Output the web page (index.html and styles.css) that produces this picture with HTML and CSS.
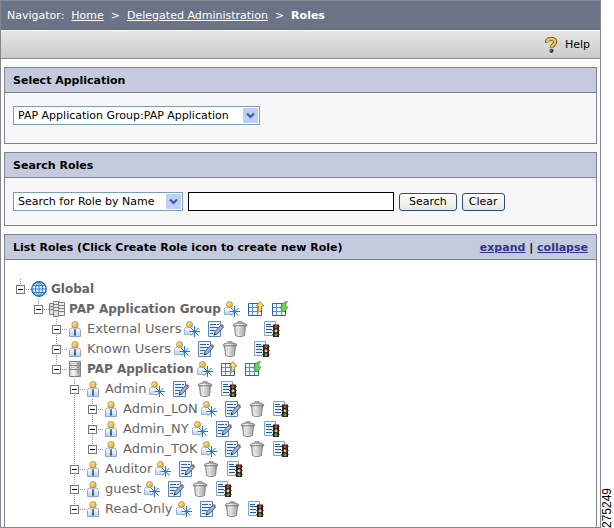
FILE: index.html
```html
<!DOCTYPE html>
<html lang="en">
<head>
	<meta charset="utf-8">
	<meta name="viewport" content="width=device-width, initial-scale=1">
	<title>Roles</title>
	<link rel="stylesheet" href="styles.css">
</head>
<body>
<svg class="sprite" aria-hidden="true">
	<defs>
		<linearGradient id="g-gold" x1="0" y1="0" x2="1" y2="1"><stop offset="0" stop-color="#fff0b0"/><stop offset="1" stop-color="#dda52c"/></linearGradient>
		<linearGradient id="g-shirt" x1="0" y1="0" x2="0" y2="1"><stop offset="0" stop-color="#ffffff"/><stop offset="1" stop-color="#b9d2ee"/></linearGradient>
		<linearGradient id="g-steel" x1="0" y1="0" x2="1" y2="0"><stop offset="0" stop-color="#c8c8c8"/><stop offset=".35" stop-color="#fafafa"/><stop offset="1" stop-color="#999"/></linearGradient>
	</defs>
	<symbol id="globe" viewBox="0 0 16 16">
		<circle cx="8" cy="8" r="7.2" fill="#e4f2ff" stroke="#1b62b4" stroke-width="1.4"/>
		<path d="M8 1v14M1 8h14M2 4.5h12M2 11.5h12M8 1C3.3 4 3.3 12 8 15M8 1c4.7 3 4.7 11 0 14" fill="none" stroke="#2f7ccc" stroke-width="1"/>
	</symbol>
	<symbol id="group" viewBox="0 0 16 16">
		<path d="M.5 2.500h7v11h-7z" fill="#e0e0e0" stroke="#808080"/>
		<path d="M1 5.500h6M1 8.500h6" stroke="#808080"/>
		<path d="M4.500 .5h6v12h-6z" fill="#ededed" stroke="#808080"/>
		<path d="M5 3.500h5M5 6.500h5" stroke="#808080"/>
		<path d="M9.500 1.500h6v13h-6z" fill="#ededed" stroke="#808080"/>
		<path d="M10 4.500h5M10 7.500h5M10 10.500h5" stroke="#808080"/>
		<path d="M4.500 9.500h5v6h-5z" fill="#dcdcdc" stroke="#808080"/>
	</symbol>
	<symbol id="server" viewBox="0 0 16 16">
		<path d="M2.500 .5h11v15h-11z" fill="url(#g-steel)" stroke="#808080"/>
		<path d="M3 4.500h10M3 8.500h10" stroke="#808080"/>
		<path d="M4 2.500h4M4 6.500h4" stroke="#bbb"/>
		<path d="M10 2.500h2M10 6.500h2M10 10.500h2" stroke="#5f9f5f"/>
	</symbol>
	<symbol id="user" viewBox="0 0 16 16">
		<path d="M2.500 15.500V9.500c0-1.500 1-2.500 2.500-2.500h6c1.500 0 2.500 1 2.500 2.500v6z" fill="url(#g-shirt)" stroke="#8fa5c0"/>
		<path d="M5.500 7l2.500 2 2.500-2z" fill="#fff" stroke="#8fa5c0" stroke-width=".6"/>
		<path d="M7.300 8.300h1.400l.3 5.700-1 1-1-1z" fill="#2c5698"/>
		<circle cx="8" cy="3.700" r="3.200" fill="url(#g-gold)" stroke="#b08428" stroke-width=".8"/>
	</symbol>
	<symbol id="newuser" viewBox="0 0 16 16">
		<path d="M.5 13.500V8.500c0-1.500 1-2.500 2.500-2.500h5c1.500 0 2.500 1 2.500 2.500v5z" fill="url(#g-shirt)" stroke="#9fb4cf"/>
		<circle cx="5.500" cy="3.500" r="3" fill="url(#g-gold)" stroke="#b08428" stroke-width=".8"/>
		<circle cx="11" cy="10.500" r="4.500" fill="#fff" opacity=".8"/>
		<path d="M10.500 5v11M5.500 10.500H16M7 7l7.500 7.500M14.500 7L7 14.500" stroke="#1f7acb" stroke-width="1"/>
	</symbol>
	<symbol id="edit" viewBox="0 0 16 16">
		<path d="M.5 .5h12v15H.5z" fill="#eaf2fc" stroke="#5b82bd"/>
		<path d="M2 3.500h6M9 3.500h2M2 6.500h8M2 9.500h5M2 12.500h3" stroke="#2f62ae"/>
		<path d="M6 14l1-3.500L13 4l2.500 2L9.500 12.700z" fill="#8bb8e6" stroke="#34507c" stroke-width=".9"/>
		<path d="M12.400 4.600L14 3l2 1.700-1.500 1.900z" fill="#d0533f"/>
		<path d="M5.800 14.300l.8-2.100 1.500 1.300z" fill="#222"/>
	</symbol>
	<symbol id="trash" viewBox="0 0 16 16">
		<path d="M2.500 4.500h11l-1 10c-1.500 1.300-7.500 1.300-9 0z" fill="url(#g-steel)" stroke="#858585"/>
		<path d="M5.700 6.500l.4 7M8 6.500v7.300M10.300 6.500l-.4 7" stroke="#b5b5b5" stroke-width=".7"/>
		<path d="M1.200 4.800c0-2 2-2.800 6.800-2.800s6.800.8 6.800 2.800z" fill="url(#g-steel)" stroke="#777"/>
		<path d="M6 2V.8h4V2" fill="none" stroke="#777"/>
	</symbol>
	<symbol id="policy" viewBox="0 0 16 16">
		<path d="M.5 .5h11v14H.5z" fill="#f1f6fd" stroke="#8aa0bf"/>
		<path d="M2 3.500h5M2 5.500h7M2 8.500h6M2 11.500h6" stroke="#2459a8"/>
		<path d="M9 3.500h6V16H9z" fill="#2a211c"/>
		<path d="M8 5h1.200v1.500zM8 9h1.200v1.500zM8 13h1.200v1.500zM16 5h-1.200v1.500zM16 9h-1.200v1.500zM16 13h-1.200v1.500z" fill="#2a211c"/>
		<circle cx="12" cy="5.700" r="1.500" fill="#d8442f"/>
		<circle cx="12" cy="9.700" r="1.500" fill="#f0cc70"/>
		<circle cx="12" cy="13.700" r="1.500" fill="#4fb04f"/>
	</symbol>
	<symbol id="export" viewBox="0 0 16 16">
		<path d="M.5 2.500h13v12H.5z" fill="#eef6ff" stroke="#2b62b4"/>
		<path d="M1 6.500h12M1 10.500h12M4.500 3v11M9.500 3v11" stroke="#5b8bd0"/>
		<path d="M12 .6l3.800 4.400h-2c.2 3.500-.8 5.800-4.500 6.500 1.500-1.800 1.500-3.500 1.300-6.500H8.200z" fill="#fbdc70" stroke="#b27a13" stroke-width=".8"/>
	</symbol>
	<symbol id="import" viewBox="0 0 16 16">
		<path d="M.5 2.500h13v12H.5z" fill="#eef6ff" stroke="#2b62b4"/>
		<path d="M1 6.500h12M1 10.500h12M4.500 3v11M9.500 3v11" stroke="#5b8bd0"/>
		<path d="M12 11L7.800 6.200H10C9.800 3 11.500.8 15.500.5 13.800 2 13.700 4 13.900 6.200H16z" fill="#6ed84a" stroke="#3f9a30" stroke-width=".8"/>
	</symbol>
	<symbol id="help" viewBox="0 0 16 16">
		<path d="M4 5.500C3.700 2.800 5.500 2 8 2s4.300 1 4.300 3.200c0 2.500-3.800 2.800-3.800 5.300" fill="none" stroke="#5d4a1c" stroke-width="4"/>
		<path d="M4.200 4.900C4.200 2.800 5.500 2 8 2s4.300 1 4.300 3.200c0 2.500-3.800 2.800-3.800 4.700" fill="none" stroke="#efc455" stroke-width="2.400"/>
		<circle cx="8.500" cy="13.700" r="2" fill="#2d2a26"/>
		<circle cx="8" cy="13.300" r=".7" fill="#bbb"/>
	</symbol>
</svg>

<div class="page">
	<div class="frame">
		<nav class="navigator">
			<span>Navigator:</span>
			<a href="#">Home</a>
			<span>&gt;</span>
			<a href="#">Delegated Administration</a>
			<span>&gt;</span>
			<strong>Roles</strong>
		</nav>
		<div class="toolbar">
			<a class="help" href="#"><svg class="icon"><use href="#help"/></svg>Help</a>
		</div>

		<main class="panels">
			<section class="panel">
				<h2 class="panel-head">Select Application</h2>
				<form class="panel-body app-form">
					<select class="drop drop-app" aria-label="Application">
						<option>PAP Application Group:PAP Application</option>
					</select>
				</form>
			</section>

			<section class="panel">
				<h2 class="panel-head">Search Roles</h2>
				<form class="panel-body search-form">
					<select class="drop drop-search" aria-label="Search type">
						<option>Search for Role by Name</option>
					</select>
					<input class="search-text" type="text" aria-label="Role name">
					<button class="btn btn-search" type="button">Search</button>
					<button class="btn" type="button">Clear</button>
				</form>
			</section>

			<section class="panel panel-list">
				<div class="panel-head">
					<h2>List Roles (Click Create Role icon to create new Role)</h2>
					<div class="links"><a href="#">expand</a> | <a href="#">collapse</a></div>
				</div>
				<ul class="tree">
					<li>
						<div class="row"><button class="toggle" aria-label="Collapse"></button><svg class="icon"><use href="#globe"/></svg><b>Global</b></div>
						<ul>
							<li>
								<div class="row"><button class="toggle" aria-label="Collapse"></button><svg class="icon"><use href="#group"/></svg><b>PAP Application Group</b>
									<div class="actions">
										<button title="Create Role"><svg class="icon"><use href="#newuser"/></svg></button>
										<button title="Export"><svg class="icon"><use href="#export"/></svg></button>
										<button title="Import"><svg class="icon"><use href="#import"/></svg></button>
									</div>
								</div>
								<ul>
									<li>
										<div class="row"><button class="toggle" aria-label="Collapse"></button><svg class="icon"><use href="#user"/></svg><span>External Users</span>
											<div class="actions wide">
												<button title="Create Role"><svg class="icon"><use href="#newuser"/></svg></button>
												<button title="Edit"><svg class="icon"><use href="#edit"/></svg></button>
												<button title="Delete"><svg class="icon"><use href="#trash"/></svg></button>
												<button title="Policies"><svg class="icon"><use href="#policy"/></svg></button>
											</div>
										</div>
									</li>
									<li>
										<div class="row"><button class="toggle" aria-label="Collapse"></button><svg class="icon"><use href="#user"/></svg><span>Known Users</span>
											<div class="actions wide">
												<button title="Create Role"><svg class="icon"><use href="#newuser"/></svg></button>
												<button title="Edit"><svg class="icon"><use href="#edit"/></svg></button>
												<button title="Delete"><svg class="icon"><use href="#trash"/></svg></button>
												<button title="Policies"><svg class="icon"><use href="#policy"/></svg></button>
											</div>
										</div>
									</li>
									<li>
										<div class="row"><button class="toggle" aria-label="Collapse"></button><svg class="icon"><use href="#server"/></svg><b>PAP Application</b>
											<div class="actions">
												<button title="Create Role"><svg class="icon"><use href="#newuser"/></svg></button>
												<button title="Export"><svg class="icon"><use href="#export"/></svg></button>
												<button title="Import"><svg class="icon"><use href="#import"/></svg></button>
											</div>
										</div>
										<ul>
											<li>
												<div class="row"><button class="toggle" aria-label="Collapse"></button><svg class="icon"><use href="#user"/></svg><span>Admin</span>
													<div class="actions">
														<button title="Create Role"><svg class="icon"><use href="#newuser"/></svg></button>
														<button title="Edit"><svg class="icon"><use href="#edit"/></svg></button>
														<button title="Delete"><svg class="icon"><use href="#trash"/></svg></button>
														<button title="Policies"><svg class="icon"><use href="#policy"/></svg></button>
													</div>
												</div>
												<ul>
													<li>
														<div class="row"><button class="toggle" aria-label="Collapse"></button><svg class="icon"><use href="#user"/></svg><span>Admin_LON</span>
															<div class="actions">
																<button title="Create Role"><svg class="icon"><use href="#newuser"/></svg></button>
																<button title="Edit"><svg class="icon"><use href="#edit"/></svg></button>
																<button title="Delete"><svg class="icon"><use href="#trash"/></svg></button>
																<button title="Policies"><svg class="icon"><use href="#policy"/></svg></button>
															</div>
														</div>
													</li>
													<li>
														<div class="row"><button class="toggle" aria-label="Collapse"></button><svg class="icon"><use href="#user"/></svg><span>Admin_NY</span>
															<div class="actions">
																<button title="Create Role"><svg class="icon"><use href="#newuser"/></svg></button>
																<button title="Edit"><svg class="icon"><use href="#edit"/></svg></button>
																<button title="Delete"><svg class="icon"><use href="#trash"/></svg></button>
																<button title="Policies"><svg class="icon"><use href="#policy"/></svg></button>
															</div>
														</div>
													</li>
													<li>
														<div class="row"><button class="toggle" aria-label="Collapse"></button><svg class="icon"><use href="#user"/></svg><span>Admin_TOK</span>
															<div class="actions">
																<button title="Create Role"><svg class="icon"><use href="#newuser"/></svg></button>
																<button title="Edit"><svg class="icon"><use href="#edit"/></svg></button>
																<button title="Delete"><svg class="icon"><use href="#trash"/></svg></button>
																<button title="Policies"><svg class="icon"><use href="#policy"/></svg></button>
															</div>
														</div>
													</li>
												</ul>
											</li>
											<li>
												<div class="row"><button class="toggle" aria-label="Collapse"></button><svg class="icon"><use href="#user"/></svg><span>Auditor</span>
													<div class="actions">
														<button title="Create Role"><svg class="icon"><use href="#newuser"/></svg></button>
														<button title="Edit"><svg class="icon"><use href="#edit"/></svg></button>
														<button title="Delete"><svg class="icon"><use href="#trash"/></svg></button>
														<button title="Policies"><svg class="icon"><use href="#policy"/></svg></button>
													</div>
												</div>
											</li>
											<li>
												<div class="row"><button class="toggle" aria-label="Collapse"></button><svg class="icon"><use href="#user"/></svg><span>guest</span>
													<div class="actions">
														<button title="Create Role"><svg class="icon"><use href="#newuser"/></svg></button>
														<button title="Edit"><svg class="icon"><use href="#edit"/></svg></button>
														<button title="Delete"><svg class="icon"><use href="#trash"/></svg></button>
														<button title="Policies"><svg class="icon"><use href="#policy"/></svg></button>
													</div>
												</div>
											</li>
											<li>
												<div class="row"><button class="toggle" aria-label="Collapse"></button><svg class="icon"><use href="#user"/></svg><span>Read-Only</span>
													<div class="actions">
														<button title="Create Role"><svg class="icon"><use href="#newuser"/></svg></button>
														<button title="Edit"><svg class="icon"><use href="#edit"/></svg></button>
														<button title="Delete"><svg class="icon"><use href="#trash"/></svg></button>
														<button title="Policies"><svg class="icon"><use href="#policy"/></svg></button>
													</div>
												</div>
											</li>
										</ul>
									</li>
								</ul>
							</li>
						</ul>
					</li>
				</ul>
			</section>
		</main>
	</div>
	<div class="figure-id">275249</div>
</div>
</body>
</html>
```
FILE: styles.css
```css
*{
	box-sizing: border-box;
}
body{
	margin: 0;
	background: white;
	color: black;
	font: 11px/14px Verdana, "DejaVu Sans", sans-serif;
}
h2{
	margin: 0;
	font-size: 11px;
}
button, input, select{
	font: inherit;
	color: inherit;
}
.sprite{
	display: block;
	width: 0;
	height: 0;
}
.icon{
	display: block;
	flex: none;
	width: 16px;
	height: 16px;
}
.page{
	display: flex;
	min-height: 100vh;
}
.frame{
	display: flex;
	flex-direction: column;
	flex: 1;
	border: 1px solid #85858a;
	border-top: none;
}

/* top bars */
.navigator{
	display: flex;
	align-items: center;
	gap: 7px;
	height: 30px;
	padding: 1px 6px 0;
	background: #6b7387;
	border-top: 1px solid #858b99;
	border-bottom: 1px solid #666b78;
	color: white;
}
.navigator a{
	color: white;
}
.toolbar{
	display: flex;
	align-items: center;
	justify-content: flex-end;
	height: 29px;
	padding: 0 10px;
	background: linear-gradient(#e6e6e6, #cacaca);
	border-top: 1px solid white;
	border-bottom: 1px solid #8a8a8a;
}
.help{
	display: flex;
	align-items: center;
	gap: 6px;
	color: black;
	text-decoration: none;
}

/* panels */
.panels{
	display: flex;
	flex-direction: column;
	flex: 1;
	gap: 8px;
	padding: 8px 3px 0;
	background: #fbfbfb;
}
.panel{
	background: #f7f7f7;
	border: 1px solid #80838c;
}
.panel-head{
	display: flex;
	align-items: center;
	justify-content: space-between;
	height: 25px;
	padding: 2px 8px 0;
	background: #c5cbdf;
	border-bottom: 1px solid #80838c;
	font-weight: bold;
}
.panel-body{
	display: flex;
	align-items: center;
	padding: 0 8px;
}
.app-form{
	height: 50px;
	padding-bottom: 5px;
}
.search-form{
	gap: 5px;
	height: 47px;
}
.links a{
	color: #33338c;
}
.drop{
	appearance: none;
	height: 19px;
	padding: 0 18px 0 4px;
	border: 1px solid #7f9db9;
	border-radius: 0;
	background: white url("data:image/svg+xml,%3Csvg xmlns='http://www.w3.org/2000/svg' width='15' height='15'%3E%3Crect width='15' height='15' rx='1' fill='%23bccff6'/%3E%3Cpath d='M4 5.500l3.500 3.500L11 5.500' fill='none' stroke='%23435f91' stroke-width='2.200'/%3E%3C/svg%3E") right 1px center no-repeat;
}
.drop-app{
	width: 247px;
}
.drop-search{
	width: 170px;
}
.search-text{
	flex: 0 1 206px;
	min-width: 0;
	height: 19px;
	border: 1px solid black;
	background: white;
}
.btn{
	height: 18px;
	padding: 0 6px;
	border: 1px solid #2f4b7c;
	border-radius: 3px;
	background: linear-gradient(#ffffff, #e8e7e0);
	line-height: 14px;
}
.btn-search{
	padding: 0 9px;
}

/* role tree */
.panel-list{
	flex: 1;
	background: white;
	border-bottom: none;
}
.tree{
	padding: 19px 11px 8px;
	color: #666;
	font-size: 13px;
}
.tree, .tree ul{
	margin: 0;
	list-style: none;
}
.tree ul{
	padding: 0 0 0 18px;
}
.tree li{
	background: repeating-linear-gradient(#999 0 1px, transparent 1px 2px) 4px 0 / 1px 100% no-repeat;
}
.tree li:last-child{
	background-size: 1px 10px;
}
.row{
	display: flex;
	align-items: center;
	height: 20px;
}
.row b{
	font-size: 12px;
}
.toggle{
	flex: none;
	width: 9px;
	height: 9px;
	padding: 0;
	border: 1px solid #777;
	background: linear-gradient(black, black) center / 5px 1px no-repeat white;
}
.toggle + .icon{
	margin: 0 4px 0 6px;
}
.toggle::after{
	content: "";
	display: block;
	width: 6px;
	height: 1px;
	margin-left: 8px;
	background: repeating-linear-gradient(90deg, transparent 0 1px, #999 1px 2px);
}
.actions{
	display: flex;
	gap: 8px;
	margin-left: 3px;
}
.actions button{
	padding: 0;
	border: none;
	background: none;
}
.wide button:last-child{
	margin-left: 8px;
}

.figure-id{
	align-self: flex-end;
	width: 13px;
	font: 12px/13px "Liberation Sans", Arial, sans-serif;
	writing-mode: vertical-rl;
	transform: rotate(180deg);
}
```
